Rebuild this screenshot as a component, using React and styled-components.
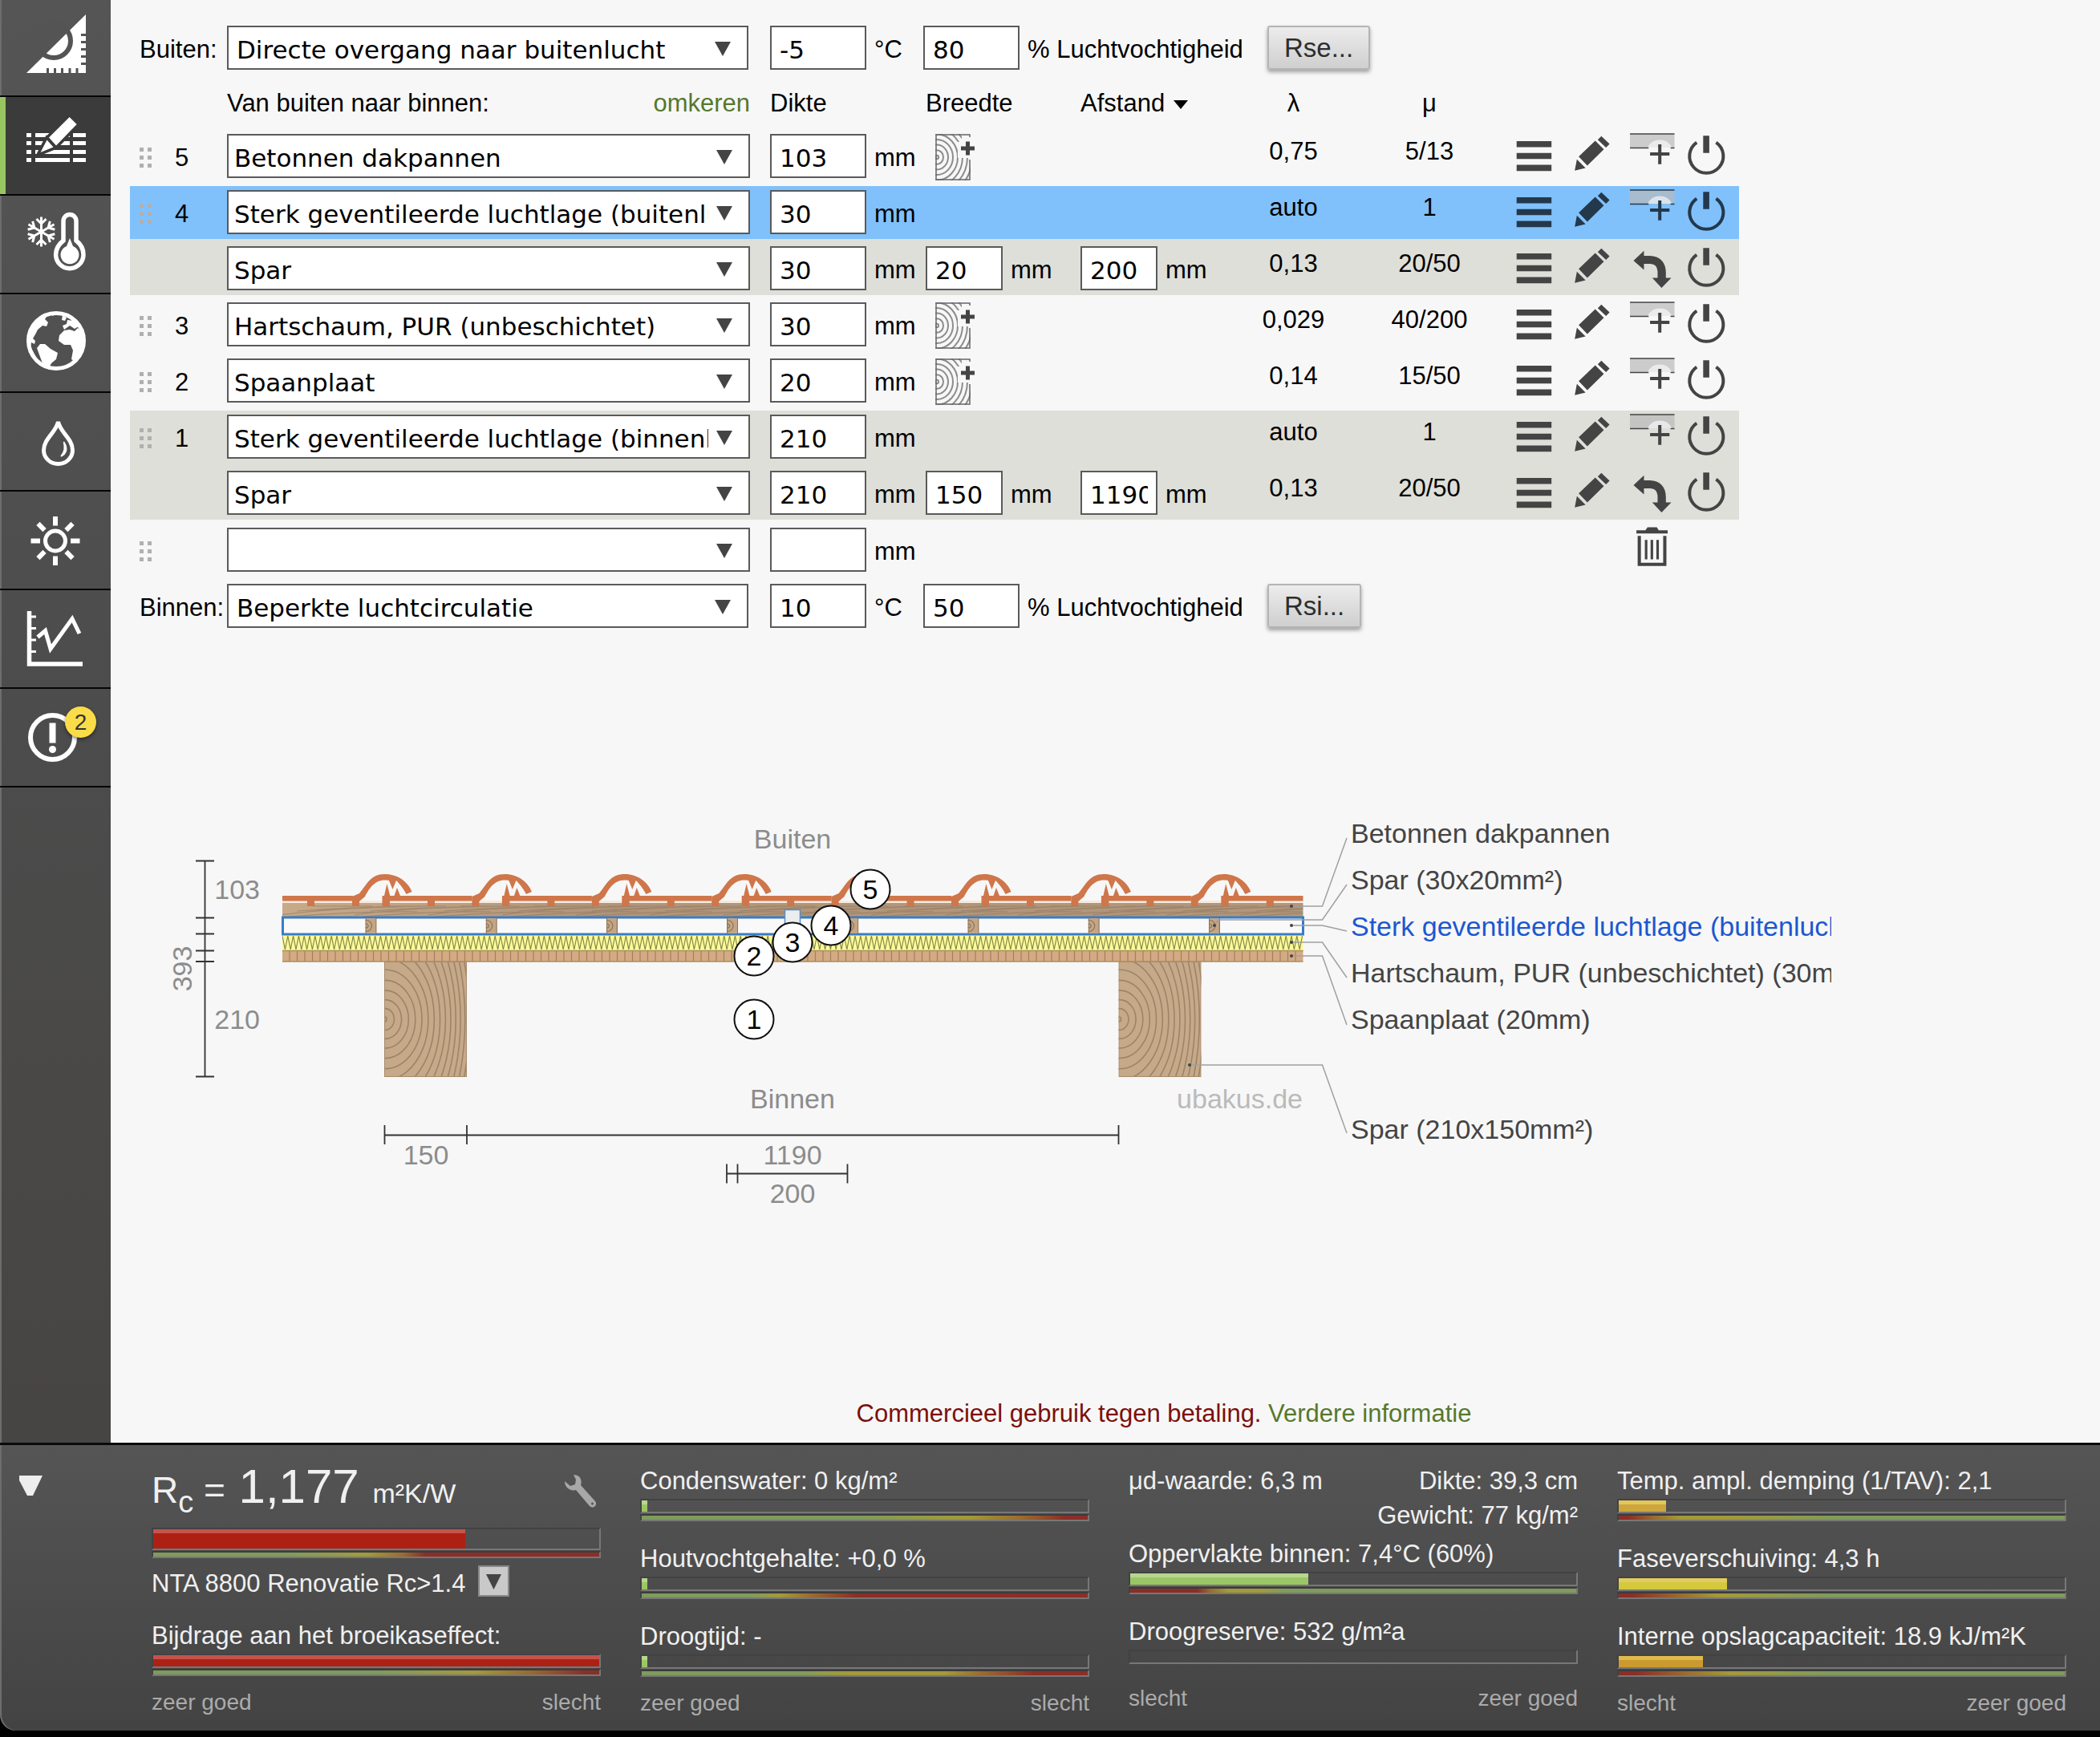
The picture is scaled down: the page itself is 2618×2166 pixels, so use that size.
import React from "react";
import styled, { createGlobalStyle } from "styled-components";

const GlobalStyle = createGlobalStyle`
  * {
    box-sizing: border-box;
  }
  body {
    margin: 0;
    background: #000000;
    color: #000000;
    font-family: "Liberation Sans", Arial, sans-serif;
    font-size: 31px;
  }
  button,
  input,
  select {
    margin: 0;
    font-family: inherit;
    font-size: inherit;
    color: inherit;
  }
`;

const Page = styled.div`
  display: flex;
  flex-direction: column;
  min-height: 100vh;
`;

const Workspace = styled.div`
  display: flex;
  flex: 1;
`;

/* ---------- side navigation ---------- */

const Sidebar = styled.nav`
  display: flex;
  flex-direction: column;
  flex: none;
  width: 138px;
  background: linear-gradient(#555555, #4c4c4c 50%, #474543);
  box-shadow: inset 2px 0 #6d6d6d;
`;

const NavButton = styled.button`
  position: relative;
  height: ${(p) => (p.$first ? "121px" : "123px")};
  padding: 0;
  border: none;
  border-bottom: 2px solid #050505;
  background: ${(p) => (p.$active ? "#3b3b3b" : "transparent")};
  box-shadow: ${(p) => (p.$active ? "inset 7px 0 #97c661" : "none")};
  svg {
    display: block;
    width: 138px;
    height: 121px;
    margin-top: ${(p) => (p.$first ? "-2px" : "0")};
  }
`;

const Badge = styled.span`
  position: absolute;
  top: 22px;
  left: 81px;
  width: 39px;
  height: 39px;
  border-radius: 50%;
  background: #f9dc48;
  box-shadow: 0 2px 4px rgba(0, 0, 0, 0.5);
  color: #333333;
  font-size: 28px;
  line-height: 39px;
  text-align: center;
`;

const SetSquareIcon = () => (
  <svg viewBox="0 0 138 121" aria-hidden="true">
    <path d="M33 93L107 20V93Z" fill="#fff" />
    <circle cx="67" cy="53" r="21" fill="none" stroke="#545454" strokeWidth="6" />
    <path
      d="M59.500 87v7M68.500 87v7M77.500 87v7M87 87v7M96 87v7M101 45.500h7M101 54.500h7M101 63.500h7M101 72.500h7M101 81.500h7"
      stroke="#545454"
      strokeWidth="3"
    />
  </svg>
);

const LayersIcon = () => (
  <svg viewBox="0 0 138 121" aria-hidden="true">
    {[45, 55, 66, 76].map((y) => (
      <path key={y} d={`M33 ${y}h6v5h-6zM44 ${y}h43v5h-43zM91 ${y}h16v5h-16z`} fill="#fff" />
    ))}
    <path
      d="M86.600 25L95.700 34 70 60.500 61 50.500ZM58.500 53.500L66.500 62.500 50.500 69Z"
      fill="#fff"
      stroke="#3b3b3b"
      strokeWidth="7"
      paintOrder="stroke"
    />
  </svg>
);

const ClimateIcon = () => (
  <svg viewBox="0 0 138 121" aria-hidden="true" fill="none" stroke="#fff">
    {[0, 60, 120, 180, 240, 300].map((a) => (
      <path
        key={a}
        d="M51.500 45V26.500M45.500 29L51.500 35 57.500 29"
        strokeWidth="3"
        transform={`rotate(${a} 51.500 45)`}
      />
    ))}
    <path
      d="M79 56V31.500a8 8 0 0 1 16 0V56C100 60 104 66 104 73.500a17.200 17.200 0 0 1-34.400 0C69.600 66 74 60 79 56Z"
      strokeWidth="5.500"
    />
    <path d="M87 53l4 10a11.500 11.500 0 1 1-8 0Z" fill="#fff" stroke="none" />
  </svg>
);

const GlobeIcon = () => (
  <svg viewBox="0 0 138 121" aria-hidden="true">
    <circle cx="70" cy="58" r="34.500" fill="none" stroke="#fff" strokeWidth="5" />
    <path
      fill="#fff"
      d="M36 54L42 39 52 28 60 25 56 31 60 35 58 40 53 39 47 44 44 50 41 55 44 58 43 62 39 60 38 66 35 62ZM46 67L50 62 56 62 63 68 72 73 70 81 64 86 61 92 54 89 50 78ZM78 26L83 29 81 33 77 32ZM84 32L92 33 98 40 93 43 87 39 80 44 78 39 83 37ZM74 51L80 45 87 44 93 46 97 42 103 48 106 60 102 72 94 84 89 81 91 70 88 63 80 63 73 58ZM62 24L70 22 66 27Z"
    />
    <path d="M39 67L49 86 46 83 40 74Z" fill="#fff" />
  </svg>
);

const DropIcon = () => (
  <svg viewBox="0 0 138 121" aria-hidden="true" fill="none" stroke="#fff">
    <path d="M72.500 36C70 49 54.500 57 54.500 71.500a18 17 0 0 0 36 0C90.500 57 75 49 72.500 36Z" strokeWidth="5" />
    <path d="M79.500 61C85 69 83 76 76 79C81 73 81 68 79.500 61Z" fill="#fff" strokeWidth="1.500" />
  </svg>
);

const SunIcon = () => (
  <svg viewBox="0 0 138 121" aria-hidden="true" fill="none" stroke="#fff" strokeWidth="6">
    <circle cx="69" cy="61.500" r="12.500" strokeWidth="5" />
    {[0, 45, 90, 135, 180, 225, 270, 315].map((a) => (
      <path key={a} d="M69 42.500V31" transform={`rotate(${a} 69 61.500)`} />
    ))}
  </svg>
);

const GraphIcon = () => (
  <svg viewBox="0 0 138 121" aria-hidden="true" fill="none" stroke="#fff">
    <path d="M36.500 26V92H103" strokeWidth="5.500" />
    <path d="M38 33h7M38 47.500h7M38 62h7M38 76.500h7" strokeWidth="3" />
    <path d="M47 58.500L56.500 50.500 63 73 90 35.500 99 54" strokeWidth="5" />
  </svg>
);

const AlertIcon = () => (
  <svg viewBox="0 0 138 121" aria-hidden="true">
    <circle cx="65.500" cy="60.500" r="27.500" fill="none" stroke="#fff" strokeWidth="6" />
    <path d="M61.500 42.500h8v25h-8z" fill="#fff" />
    <circle cx="65.500" cy="75.500" r="4.500" fill="#fff" />
  </svg>
);

const navItems = [
  { name: "Geometrie", icon: SetSquareIcon },
  { name: "Lagen", icon: LayersIcon, active: true },
  { name: "Klimaat", icon: ClimateIcon },
  { name: "Milieu", icon: GlobeIcon },
  { name: "Vocht", icon: DropIcon },
  { name: "Hitte", icon: SunIcon },
  { name: "Grafiek", icon: GraphIcon },
  { name: "Meldingen", icon: AlertIcon, badge: 2 },
];

/* ---------- form controls ---------- */

const Main = styled.main`
  display: flex;
  flex-direction: column;
  flex: 1;
  min-width: 0;
  padding: 32px 0 18px 24px;
  background: #f7f7f7;
`;

const SelectBox = styled.div`
  position: relative;
  width: ${(p) => (p.$wide ? "652px" : "650px")};
  select {
    appearance: none;
    display: block;
    width: 100%;
    height: 55px;
    padding: 4px 50px 0 ${(p) => (p.$wide ? "7px" : "10px")};
    border: 2px solid #5a5a5a;
    border-radius: 0;
    background: #ffffff;
    font-family: "DejaVu Sans", Verdana, sans-serif;
  }
  svg {
    position: absolute;
    top: 20px;
    right: 22px;
    width: 20px;
    height: 18px;
    pointer-events: none;
  }
`;

const NumberInput = styled.input`
  width: ${(p) => (p.$small ? "96px" : "120px")};
  height: 55px;
  padding: 4px 10px 0;
  border: 2px solid #5a5a5a;
  border-radius: 0;
  background: #ffffff;
  font-family: "DejaVu Sans", Verdana, sans-serif;
`;

const Unit = styled.span`
  padding-left: 10px;
  line-height: 60px;
`;

const Field = styled.div`
  display: flex;
  height: 55px;
`;

const ClimateRow = styled.div`
  display: flex;
  align-items: flex-start;
  height: 55px;
  white-space: nowrap;
`;

const RowLabel = styled.label`
  width: 121px;
  padding-left: 12px;
  line-height: 60px;
`;

const ClimateField = styled.div`
  display: flex;
  width: ${(p) => p.$width}px;
`;

const Gap = styled.div`
  width: 27px;
`;

const ResistanceButton = styled.button`
  height: 55px;
  padding: 0 19px;
  border: 2px solid #b4b4b4;
  border-radius: 3px;
  background: linear-gradient(#ececec, #cfcfcf);
  box-shadow: 0 3px 5px rgba(0, 0, 0, 0.35);
  color: #2e2e2e;
  font-size: 33px;
  line-height: 51px;
`;

function Select({ id, label, value, wide }) {
  return (
    <SelectBox $wide={wide}>
      <select id={id} aria-label={label} defaultValue={value}>
        <option>{value}</option>
      </select>
      <svg viewBox="0 0 20 18" aria-hidden="true">
        <path d="M0 0H20L10 18Z" fill="#444" />
      </svg>
    </SelectBox>
  );
}

function Climate({ id, side, surface, temperature, humidity, action }) {
  return (
    <ClimateRow>
      <RowLabel htmlFor={id}>{side}:</RowLabel>
      <Select id={id} value={surface} />
      <Gap />
      <ClimateField $width={191}>
        <NumberInput aria-label={`${side} temperatuur`} defaultValue={temperature} />
        <Unit>°C</Unit>
      </ClimateField>
      <ClimateField $width={429}>
        <NumberInput aria-label={`${side} luchtvochtigheid`} defaultValue={humidity} />
        <Unit>% Luchtvochtigheid</Unit>
      </ClimateField>
      <ResistanceButton type="button">{action}</ResistanceButton>
    </ClimateRow>
  );
}

/* ---------- layer table ---------- */

const LayerTable = styled.table`
  width: 2006px;
  table-layout: fixed;
  border-collapse: collapse;
  th,
  td {
    padding: 0;
    vertical-align: top;
    font-weight: normal;
    text-align: left;
    white-space: nowrap;
  }
`;

const HeadRow = styled.tr`
  height: 75px;
  line-height: 36px;
  && th {
    padding-top: 24px;
  }
  && th.centered {
    text-align: center;
  }
`;

const NameHead = styled.div`
  display: flex;
  justify-content: space-between;
  width: 652px;
`;

const GreenLink = styled.a`
  color: #56782c;
  text-decoration: none;
`;

const rowColors = { selected: "#80c1fb", grouped: "#dedfd9", plain: "transparent" };

const LayerRow = styled.tr`
  height: ${(p) => p.$height}px;
  background: ${(p) => rowColors[p.$tone || "plain"]};
  && td {
    padding-top: ${(p) => p.$top}px;
  }
`;

const Handle = styled.svg`
  display: block;
  width: 16px;
  height: 26px;
  margin: 17px 0 0 12px;
`;

const LayerNumber = styled.div`
  padding-left: 16px;
  line-height: 60px;
`;

const Value = styled.div`
  line-height: 44px;
  text-align: center;
`;

const Actions = styled.div`
  display: grid;
  grid-template-columns: 72px 76px 68px 56px;
  padding-left: 17px;
  height: 56px;
`;

const IconButton = styled.button`
  width: 56px;
  height: 56px;
  padding: 0;
  border: none;
  background: none;
  color: ${(p) => (p.$selected ? "#24384c" : "#444444")};
  svg {
    display: block;
    width: 56px;
    height: 56px;
    overflow: visible;
  }
`;

const AddWoodButton = styled.button`
  display: block;
  width: 56px;
  height: 58px;
  margin-left: 12px;
  padding: 0;
  border: none;
  background: none;
  svg {
    display: block;
    width: 56px;
    height: 58px;
  }
`;

const TrashSlot = styled.div`
  padding-left: 165px;
`;

const MenuIcon = () => (
  <svg viewBox="0 0 125 125" aria-hidden="true">
    <path d="M15 20h97v17H15zM15 53h97v17H15zM15 86h97v17H15z" fill="currentColor" />
  </svg>
);

const PencilIcon = () => (
  <svg viewBox="0 0 125 125" aria-hidden="true">
    <path d="M16 102L22 71 46 95ZM27 63L73 19 97 43 51 88ZM80 16L90 6 113 28 103 38Z" fill="currentColor" />
  </svg>
);

const InsertIcon = () => (
  <svg viewBox="0 0 125 125" aria-hidden="true">
    <path d="M0 0H124V38H0Z" fill="rgba(185,185,185,0.7)" />
    <path d="M49 38A38 38 0 0 1 117 38Z" fill="rgba(255,255,255,0.6)" />
    <path d="M0 0H124M0 39H52M113 39H124" stroke="currentColor" strokeWidth="3" />
    <path d="M56 56H110M83 29V84" stroke="currentColor" strokeWidth="9" />
  </svg>
);

const SwapIcon = () => (
  <svg viewBox="0 0 125 125" aria-hidden="true">
    <path d="M10 40L39 13V27H55Q98 29 100 72V88H115L88 116 62 88H77V70Q76 50 57 49H39V66Z" fill="currentColor" />
  </svg>
);

const PowerIcon = () => (
  <svg viewBox="0 0 125 125" aria-hidden="true">
    <path d="M34 23.500A47 47 0 1 0 88 23.500" fill="none" stroke="currentColor" strokeWidth="9" />
    <path d="M52 5h17v48H52z" fill="currentColor" />
  </svg>
);

const TrashIcon = () => (
  <svg viewBox="0 0 125 125" aria-hidden="true" fill="none" stroke="currentColor">
    <path d="M18 7H43L49 -1H75L80 7H105V16H18Z" fill="currentColor" stroke="none" />
    <path d="M26 23V102H97V23" strokeWidth="9" />
    <path d="M45 34V88M61 34V88M77 34V88" strokeWidth="7" />
  </svg>
);

const AddWoodIcon = () => (
  <svg viewBox="0 0 56 58" aria-hidden="true" fill="none">
    <clipPath id="wood-sample">
      <path d="M0 0H33V10H28V30H44V58H0Z" />
    </clipPath>
    <g clipPath="url(#wood-sample)" stroke="#8c8c8c" strokeWidth="2">
      {[2, 8, 14, 20, 26, 32, 38, 44, 50].map((r) => (
        <ellipse key={r} cx="2" cy="29" rx={r} ry={r * 1.1} />
      ))}
    </g>
    <path d="M33 1H1V57H43V32M33 1h10v3" stroke="#666" strokeWidth="1.500" />
    <path d="M32 18H49M40.500 9.500V26.500" stroke="#444" strokeWidth="5" />
  </svg>
);

const HandleIcon = () => (
  <Handle viewBox="0 0 16 26" aria-hidden="true">
    <path d="M0 0h5v5H0zM10 0h5v5h-5zM0 10h5v5H0zM10 10h5v5h-5zM0 20h5v5H0zM10 20h5v5h-5z" fill="#b0b0b0" />
  </Handle>
);

const layers = [
  { nr: 5, name: "Betonnen dakpannen", thick: 103, wood: true, lambda: "0,75", mu: "5/13", height: 70, top: 5 },
  { nr: 4, name: "Sterk geventileerde luchtlage (buitenlucht)", thick: 30, lambda: "auto", mu: "1", tone: "selected", height: 66, top: 5 },
  { name: "Spar", thick: 30, width: 20, spacing: 200, lambda: "0,13", mu: "20/50", tone: "grouped", height: 70, top: 9 },
  { nr: 3, name: "Hartschaum, PUR (unbeschichtet)", thick: 30, wood: true, lambda: "0,029", mu: "40/200", height: 70, top: 9 },
  { nr: 2, name: "Spaanplaat", thick: 20, wood: true, lambda: "0,14", mu: "15/50", height: 74, top: 9 },
  { nr: 1, name: "Sterk geventileerde luchtlage (binnenlucht)", thick: 210, lambda: "auto", mu: "1", tone: "grouped", height: 66, top: 5 },
  { name: "Spar", thick: 210, width: 150, spacing: 1190, lambda: "0,13", mu: "20/50", tone: "grouped", height: 70, top: 9 },
];

function Layer({ layer }) {
  const selected = layer.tone === "selected";
  return (
    <LayerRow $height={layer.height} $top={layer.top} $tone={layer.tone}>
      <td>{layer.nr && <HandleIcon />}</td>
      <td>{layer.nr && <LayerNumber>{layer.nr}</LayerNumber>}</td>
      <td>
        <Select wide label="Materiaal" value={layer.name} />
      </td>
      <td>
        <Field>
          <NumberInput aria-label="Dikte" defaultValue={layer.thick} />
          <Unit>mm</Unit>
        </Field>
      </td>
      <td>
        {layer.wood && (
          <AddWoodButton type="button" aria-label="Hout toevoegen">
            <AddWoodIcon />
          </AddWoodButton>
        )}
        {layer.width && (
          <Field>
            <NumberInput $small aria-label="Breedte" defaultValue={layer.width} />
            <Unit>mm</Unit>
          </Field>
        )}
      </td>
      <td>
        {layer.spacing && (
          <Field>
            <NumberInput $small aria-label="Afstand" defaultValue={layer.spacing} />
            <Unit>mm</Unit>
          </Field>
        )}
      </td>
      <td>
        <Value>{layer.lambda}</Value>
      </td>
      <td>
        <Value>{layer.mu}</Value>
      </td>
      <td>
        <Actions>
          <IconButton type="button" aria-label="Menu" $selected={selected}>
            <MenuIcon />
          </IconButton>
          <IconButton type="button" aria-label="Bewerken" $selected={selected}>
            <PencilIcon />
          </IconButton>
          <IconButton type="button" aria-label={layer.nr ? "Laag invoegen" : "Draaien"} $selected={selected}>
            {layer.nr ? <InsertIcon /> : <SwapIcon />}
          </IconButton>
          <IconButton type="button" aria-label="Uitschakelen" $selected={selected}>
            <PowerIcon />
          </IconButton>
        </Actions>
      </td>
    </LayerRow>
  );
}

const SortMark = styled.svg`
  width: 18px;
  height: 11px;
  margin-left: 11px;
  vertical-align: 3px;
`;

const columnWidths = [40, 81, 677, 194, 193, 181, 169, 170, 301];

function Layers() {
  return (
    <LayerTable>
      <colgroup>
        {columnWidths.map((w) => (
          <col key={w} width={w} />
        ))}
      </colgroup>
      <thead>
        <HeadRow>
          <th />
          <th />
          <th>
            <NameHead>
              Van buiten naar binnen:
              <GreenLink href="#omkeren">omkeren</GreenLink>
            </NameHead>
          </th>
          <th>Dikte</th>
          <th>Breedte</th>
          <th>
            Afstand
            <SortMark viewBox="0 0 18 11" aria-hidden="true">
              <path d="M0 0H18L9 11Z" />
            </SortMark>
          </th>
          <th className="centered">λ</th>
          <th className="centered">μ</th>
          <th />
        </HeadRow>
      </thead>
      <tbody>
        {layers.map((layer, i) => (
          <Layer key={i} layer={layer} />
        ))}
        <LayerRow $height={80} $top={10}>
          <td>
            <HandleIcon />
          </td>
          <td />
          <td>
            <Select wide label="Nieuw materiaal" value="" />
          </td>
          <td>
            <Field>
              <NumberInput aria-label="Dikte nieuwe laag" defaultValue="" />
              <Unit>mm</Unit>
            </Field>
          </td>
          <td />
          <td />
          <td />
          <td />
          <td>
            <TrashSlot>
              <IconButton type="button" aria-label="Alles verwijderen">
                <TrashIcon />
              </IconButton>
            </TrashSlot>
          </td>
        </LayerRow>
      </tbody>
    </LayerTable>
  );
}

/* ---------- cross section ---------- */

const Drawing = styled.svg`
  display: block;
  width: 2083px;
  height: 520px;
  margin: 216px 0 0 38px;
  font-size: 34px;
`;

const range = (n) => Array.from({ length: n }, (_, i) => i);

const zigzag =
  "M352 1168" +
  range(187)
    .map(() => `l3.400 17l3.400 -17`)
    .join("");

const boardLines = range(133)
  .map((i) => `M${361 + i * 9.5} 1187v13`)
  .join("");

const grain = range(14)
  .map((i) => {
    const x = 350 + i * 92;
    return `M${x} 1142q60 -9 180 -11M${x + 20} 1137q70 -5 150 -6M${x + 40} 1131h74M${x + 10} 1144q90 -7 160 -6`;
  })
  .join("");

const Tile = ({ x }) => (
  <g transform={`translate(${x} 0)`}>
    <path d="M-41 1119L-32 1115C-23 1105 -19 1091 0 1091C16 1091 29 1101 33.500 1113L26.500 1116C21 1105 14 1099 14 1099L9.500 1110 5 1099C-12 1096 -19 1108 -25 1119L-32 1125V1131H-41Z" />
    <path d="M-3.500 1118H-1L2.400 1103 6.300 1118H11.500L15 1108 19 1118H108.500V1124.500H62V1131H53V1124.500H6V1131H-3.500Z" />
  </g>
);

const Beam = ({ x }) => (
  <svg x={x} y="1200" width="103" height="144" viewBox="0 0 103 144">
    <rect width="103" height="144" fill="#c6a988" />
    <g fill="none" stroke="#9c8468" strokeWidth="1.600">
      {range(17).map((i) => (
        <ellipse key={i} cx="1" cy="72" rx={2 + i * 9.6 - i * i * 0.16} ry={3 + i * 10 + i * i * 0.35} />
      ))}
    </g>
    <rect x="0.500" y="0.500" width="102" height="143" fill="none" stroke="#a98b6c" />
  </svg>
);

const Batten = ({ x }) => (
  <svg x={x} y="1146" width="14" height="19" viewBox="0 0 14 19">
    <rect width="14" height="19" fill="#c4a585" />
    <g fill="none" stroke="#8c7458" strokeWidth="1.200">
      <circle cx="1" cy="9.500" r="2.500" />
      <circle cx="1" cy="9.500" r="7" />
      <path d="M0.500 0v19M13.500 0v19" />
    </g>
  </svg>
);

const markers = [
  [1, 940, 1272],
  [2, 940, 1193],
  [3, 988, 1176],
  [4, 1036, 1155],
  [5, 1085, 1110],
];

const callouts = [
  { text: "Betonnen dakpannen", y: 1052, dot: [1610, 1131], line: "M1610 1131H1648.500L1679 1046" },
  { text: "Spar (30x20mm²)", y: 1110, dot: [1514, 1155], line: "M1514 1155L1519 1148H1648.500L1679 1104" },
  { text: "Sterk geventileerde luchtlage (buitenlucht)", y: 1168, dot: [1610, 1155], line: "M1610 1155H1648.500L1679 1162", active: true },
  { text: "Hartschaum, PUR (unbeschichtet) (30mm)", y: 1226, dot: [1610, 1176], line: "M1610 1176H1648.500L1679 1220" },
  { text: "Spaanplaat (20mm)", y: 1284, dot: [1610, 1193], line: "M1610 1193H1648.500L1679 1279" },
  { text: "Spar (210x150mm²)", y: 1421, dot: [1483, 1329], line: "M1483 1329H1648.500L1679 1414" },
];

function CrossSection() {
  return (
    <Drawing viewBox="200 1000 2083 520" role="img" aria-label="Doorsnede van het dak">
      <defs>
        <linearGradient id="plank">
          <stop offset="0" stopColor="#c8aa89" />
          <stop offset="0.300" stopColor="#b2967a" />
          <stop offset="1" stopColor="#b2977a" />
        </linearGradient>
        <clipPath id="stack">
          <rect x="352" y="1060" width="1272.500" height="145" />
        </clipPath>
      </defs>

      <g clipPath="url(#stack)">
        <rect x="352" y="1124" width="1273" height="4" fill="#f6e9df" />
        <rect x="352" y="1127" width="1273" height="18" fill="url(#plank)" />
        <path d={grain} fill="none" stroke="#8f7860" strokeWidth="1.200" opacity="0.600" />
        <g fill="#cf764a">
          <path d="M352 1118H440V1124.500H392V1131H383V1124.500H352Z" />
          {range(8).map((i) => (
            <Tile key={i} x={480 + i * 149.4} />
          ))}
        </g>
        <rect x="352" y="1167" width="1273" height="20" fill="#fcfc98" />
        <path d={zigzag} fill="none" stroke="#84844e" strokeWidth="1.200" />
        <rect x="352" y="1186" width="1273" height="14" fill="#d4aa84" />
        <path d={boardLines} stroke="#a08058" strokeWidth="1.200" />
        <path d="M352 1186.500H1625M352 1200H1625" stroke="#a89060" strokeWidth="1.500" />
      </g>

      <rect x="352.500" y="1145" width="1272" height="21" fill="#f9f9f9" stroke="#3a7cc4" strokeWidth="3" />
      <path d="M978.500 1160V1135.500H997.500V1160" fill="#ebeef0" stroke="#5a8fc4" strokeWidth="1.500" />
      {range(8).map((i) => (
        <Batten key={i} x={455.5 + i * 150.2} />
      ))}
      <Beam x={479} />
      <Beam x={1394.5} />

      <g fill="none" stroke="#333" strokeWidth="1.800">
        <path d="M255.500 1074.500V1343.500M244 1074.500h23M244 1145.500h23M244 1165.500h23M244 1186.500h23M244 1200h23M244 1343.500h23" />
        <path d="M479.500 1416.500H1394.500M479.500 1404v24M582 1404v24M1394.500 1404v24" />
        <path d="M906 1464.500H1056.500M906 1452.500v24M919.500 1452.500v24M1056.500 1452.500v24" />
      </g>

      <g fill="#8c8c8c">
        <text x="324" y="1122" textAnchor="end">103</text>
        <text x="324" y="1284" textAnchor="end">210</text>
        <text transform="translate(239 1209) rotate(-90)" textAnchor="middle">393</text>
        <text x="988" y="1059" textAnchor="middle">Buiten</text>
        <text x="988" y="1383" textAnchor="middle">Binnen</text>
        <text x="531" y="1453" textAnchor="middle">150</text>
        <text x="988" y="1453" textAnchor="middle">1190</text>
        <text x="988" y="1501" textAnchor="middle">200</text>
        <text x="1624" y="1383" textAnchor="end" fill="#bababa">ubakus.de</text>
      </g>

      {markers.map(([nr, x, y]) => (
        <g key={nr}>
          <circle cx={x} cy={y} r="24.500" fill="#fff" stroke="#111" strokeWidth="2" />
          <text x={x} y={y + 12} textAnchor="middle">{nr}</text>
        </g>
      ))}

      {callouts.map((c) => (
        <g key={c.text}>
          <path d={c.line} fill="none" stroke="#a0a0a0" strokeWidth="1.500" />
          <circle cx={c.dot[0]} cy={c.dot[1]} r="2" fill="#444" />
          <text x="1684" y={c.y} fill={c.active ? "#1c57d0" : "#444"}>{c.text}</text>
        </g>
      ))}
    </Drawing>
  );
}

const Notice = styled.p`
  margin: auto 0 0;
  padding-left: 122px;
  color: #7c0f0a;
  line-height: 36px;
  text-align: center;
`;

/* ---------- results ---------- */

const Results = styled.footer`
  display: flex;
  margin-bottom: 8px;
  padding: 27px 42px 18px 0;
  border-top: 3px solid #0a0a0a;
  border-radius: 0 0 0 20px;
  background: linear-gradient(#555555, #434343);
  box-shadow: inset 2px 0 #6d6d6d;
  color: #f0f0f0;
  font-size: 31px;
  line-height: 36px;
`;

const CollapseButton = styled.button`
  flex: none;
  width: 189px;
  height: 40px;
  padding: 6px 0 0 24px;
  border: none;
  background: none;
  svg {
    display: block;
    width: 29px;
    height: 25px;
  }
`;

const Columns = styled.div`
  display: grid;
  grid-template-columns: repeat(4, 1fr);
  gap: 49px;
  flex: 1;
`;

const Column = styled.section`
  display: flex;
  flex-direction: column;
  gap: 29px;
  min-width: 0;
  white-space: nowrap;
`;

const Headline = styled.div`
  display: flex;
  justify-content: space-between;
  height: 76px;
`;

const RcValue = styled.p`
  margin: 0;
  font-size: 60px;
  line-height: 50px;
  span {
    font-size: 46px;
  }
  sub {
    position: relative;
    top: 12px;
    font-size: 38px;
    line-height: 0;
    vertical-align: baseline;
  }
  small {
    font-size: 34px;
  }
`;

const ToolButton = styled.button`
  width: 46px;
  height: 50px;
  padding: 9px 0 0;
  border: none;
  background: none;
  svg {
    display: block;
    width: 42px;
    height: 42px;
  }
`;

const Standard = styled.div`
  display: flex;
  gap: 16px;
  margin-top: 9px;
  height: 41px;
  span {
    padding-top: 5px;
  }
`;

const StandardButton = styled.button`
  width: 39px;
  height: 39px;
  padding: 0;
  border: 2px solid #888888;
  background: #c9c9c9;
  svg {
    display: block;
    width: 35px;
    height: 35px;
  }
`;

const Track = styled.div`
  height: ${(p) => (p.$tall ? "28px" : "18px")};
  margin-top: ${(p) => (p.$tall ? "0" : "4px")};
  border: 2px solid;
  border-color: #424242 #777777 #777777 #424242;
`;

const Fill = styled.div`
  height: 100%;
  background: linear-gradient(${(p) => p.$light} 5px, ${(p) => p.$base} 5px);
`;

const Scale = styled.div`
  height: 9px;
  margin-top: 1px;
  border: 2px solid;
  border-color: #3c3c3c #777777 #777777 #424242;
  background: ${(p) => p.$gradient || "none"};
  visibility: ${(p) => (p.$gradient ? "visible" : "hidden")};
`;

const Legend = styled.div`
  display: flex;
  justify-content: space-between;
  margin-top: -12px;
  color: #ababab;
  font-size: 28px;
  line-height: 32px;
`;

const Summary = styled.div`
  display: flex;
  flex-direction: column;
  gap: 7px;
  margin-bottom: -17px;
`;

const SummaryLine = styled.div`
  display: flex;
  justify-content: ${(p) => (p.$end ? "flex-end" : "space-between")};
`;

const fills = {
  red: ["#c6524a", "#ad2115"],
  green: ["#b6d68f", "#9bc665"],
  amber: ["#e2c75c", "#cfa63e"],
  yellow: ["#e2cc62", "#d4c93d"],
  orange: ["#e0bb4c", "#cb9a2f"],
};

const G = "#7f9b5d";
const Y = "#a39a39";
const O = "#9a6c2f";
const R = "#8b2e27";

const scale = (...stops) => `linear-gradient(90deg, ${stops.join(", ")})`;

function Meter({ tall, value, color, gradient }) {
  const [light, base] = fills[color];
  return (
    <>
      <Track $tall={tall}>
        {value > 0 && <Fill $light={light} $base={base} style={{ width: `${value}%` }} />}
      </Track>
      <Scale $gradient={gradient} />
    </>
  );
}

function Metric({ label, ...meter }) {
  return (
    <div>
      <div>{label}</div>
      <Meter {...meter} />
    </div>
  );
}

const Ends = ({ reverse }) => (
  <Legend>
    <span>{reverse ? "slecht" : "zeer goed"}</span>
    <span>{reverse ? "zeer goed" : "slecht"}</span>
  </Legend>
);

function ResultsPanel() {
  return (
    <Results>
      <CollapseButton type="button" aria-label="Inklappen">
        <svg viewBox="0 0 29 25" aria-hidden="true">
          <path d="M0 0H29L17 25H10L0 6Z" fill="#eee" />
        </svg>
      </CollapseButton>
      <Columns>
        <Column>
          <div>
            <Headline>
              <RcValue>
                <span>
                  R<sub>c</sub> =
                </span>{" "}
                1,177 <small>m²K/W</small>
              </RcValue>
              <ToolButton type="button" aria-label="Instellingen">
                <svg viewBox="0 0 42 42" aria-hidden="true">
                  <path
                    d="M12 1C20 1 23 7 21 14L39 34A4.500 4.500 0 0 1 32 40L15 20C8 22 1 17 1 9L8 15 14 13 15 7Z"
                    fill="#a8a8a8"
                  />
                  <circle cx="35.500" cy="37" r="1.500" fill="#555" />
                </svg>
              </ToolButton>
            </Headline>
            <Meter tall value={70} color="red" gradient={scale(`${G} 30%`, `${Y} 48%`, `${O} 56%`, `${R} 61%`)} />
            <Standard>
              <span>NTA 8800 Renovatie Rc&gt;1.4</span>
              <StandardButton type="button" aria-label="Norm kiezen">
                <svg viewBox="0 0 35 35" aria-hidden="true">
                  <path d="M8 9H27L17.500 28Z" fill="#444" />
                </svg>
              </StandardButton>
            </Standard>
          </div>
          <Metric
            label="Bijdrage aan het broeikaseffect:"
            value={100}
            color="red"
            gradient={scale(`${G} 50%`, `${Y} 72%`, `${O} 84%`, `${R} 97%`)}
          />
          <Ends />
        </Column>
        <Column>
          <Metric label="Condenswater: 0 kg/m²" value={1.2} color="green" gradient={scale(`${G} 48%`, `${Y} 73%`, `${O} 85%`, `${R} 95%`)} />
          <Metric label="Houtvochtgehalte: +0,0 %" value={1.2} color="green" gradient={scale(`${G} 24%`, `${Y} 31%`, `${O} 38%`, `${R} 48%`)} />
          <Metric label="Droogtijd: -" value={1.2} color="green" gradient={scale(`${G} 35%`, `${Y} 46%`, `${Y} 68%`, `${O} 76%`, `${R} 88%`)} />
          <Ends />
        </Column>
        <Column>
          <Summary>
            <SummaryLine>
              <span>μd-waarde: 6,3 m</span>
              <span>Dikte: 39,3 cm</span>
            </SummaryLine>
            <SummaryLine $end>Gewicht: 77 kg/m²</SummaryLine>
          </Summary>
          <Metric
            label="Oppervlakte binnen: 7,4°C (60%)"
            value={40}
            color="green"
            gradient={scale(`${R} 15%`, `${O} 18%`, `${Y} 22%`, `${Y} 29%`, `${G} 35%`)}
          />
          <Metric label="Droogreserve: 532 g/m²a" value={0} color="green" />
          <Ends reverse />
        </Column>
        <Column>
          <Metric label="Temp. ampl. demping (1/TAV): 2,1" value={10.7} color="amber" gradient={scale(`${R} 2%`, `${O} 8%`, `${Y} 14%`, `${Y} 24%`, `${G} 50%`)} />
          <Metric label="Faseverschuiving: 4,3 h" value={24.2} color="yellow" gradient={scale(`${R} 3%`, `${O} 14%`, `${Y} 22%`, `${G} 48%`)} />
          <Metric label="Interne opslagcapaciteit: 18.9 kJ/m²K" value={18.9} color="orange" gradient={scale(`${R} 4%`, `${O} 15%`, `${Y} 25%`, `${G} 48%`)} />
          <Ends reverse />
        </Column>
      </Columns>
    </Results>
  );
}

export default function App() {
  return (
    <>
      <GlobalStyle />
      <Page>
        <Workspace>
          <Sidebar>
            {navItems.map(({ name, icon: Icon, active, badge }, i) => (
              <NavButton key={name} type="button" aria-label={name} $first={i === 0} $active={active}>
                <Icon />
                {badge && <Badge>{badge}</Badge>}
              </NavButton>
            ))}
          </Sidebar>
          <Main>
            <Climate
              id="outside"
              side="Buiten"
              surface="Directe overgang naar buitenlucht"
              temperature="-5"
              humidity="80"
              action="Rse..."
            />
            <Layers />
            <Climate
              id="inside"
              side="Binnen"
              surface="Beperkte luchtcirculatie"
              temperature="10"
              humidity="50"
              action="Rsi..."
            />
            <CrossSection />
            <Notice>
              Commercieel gebruik tegen betaling. <GreenLink href="#informatie">Verdere informatie</GreenLink>
            </Notice>
          </Main>
        </Workspace>
        <ResultsPanel />
      </Page>
    </>
  );
}
